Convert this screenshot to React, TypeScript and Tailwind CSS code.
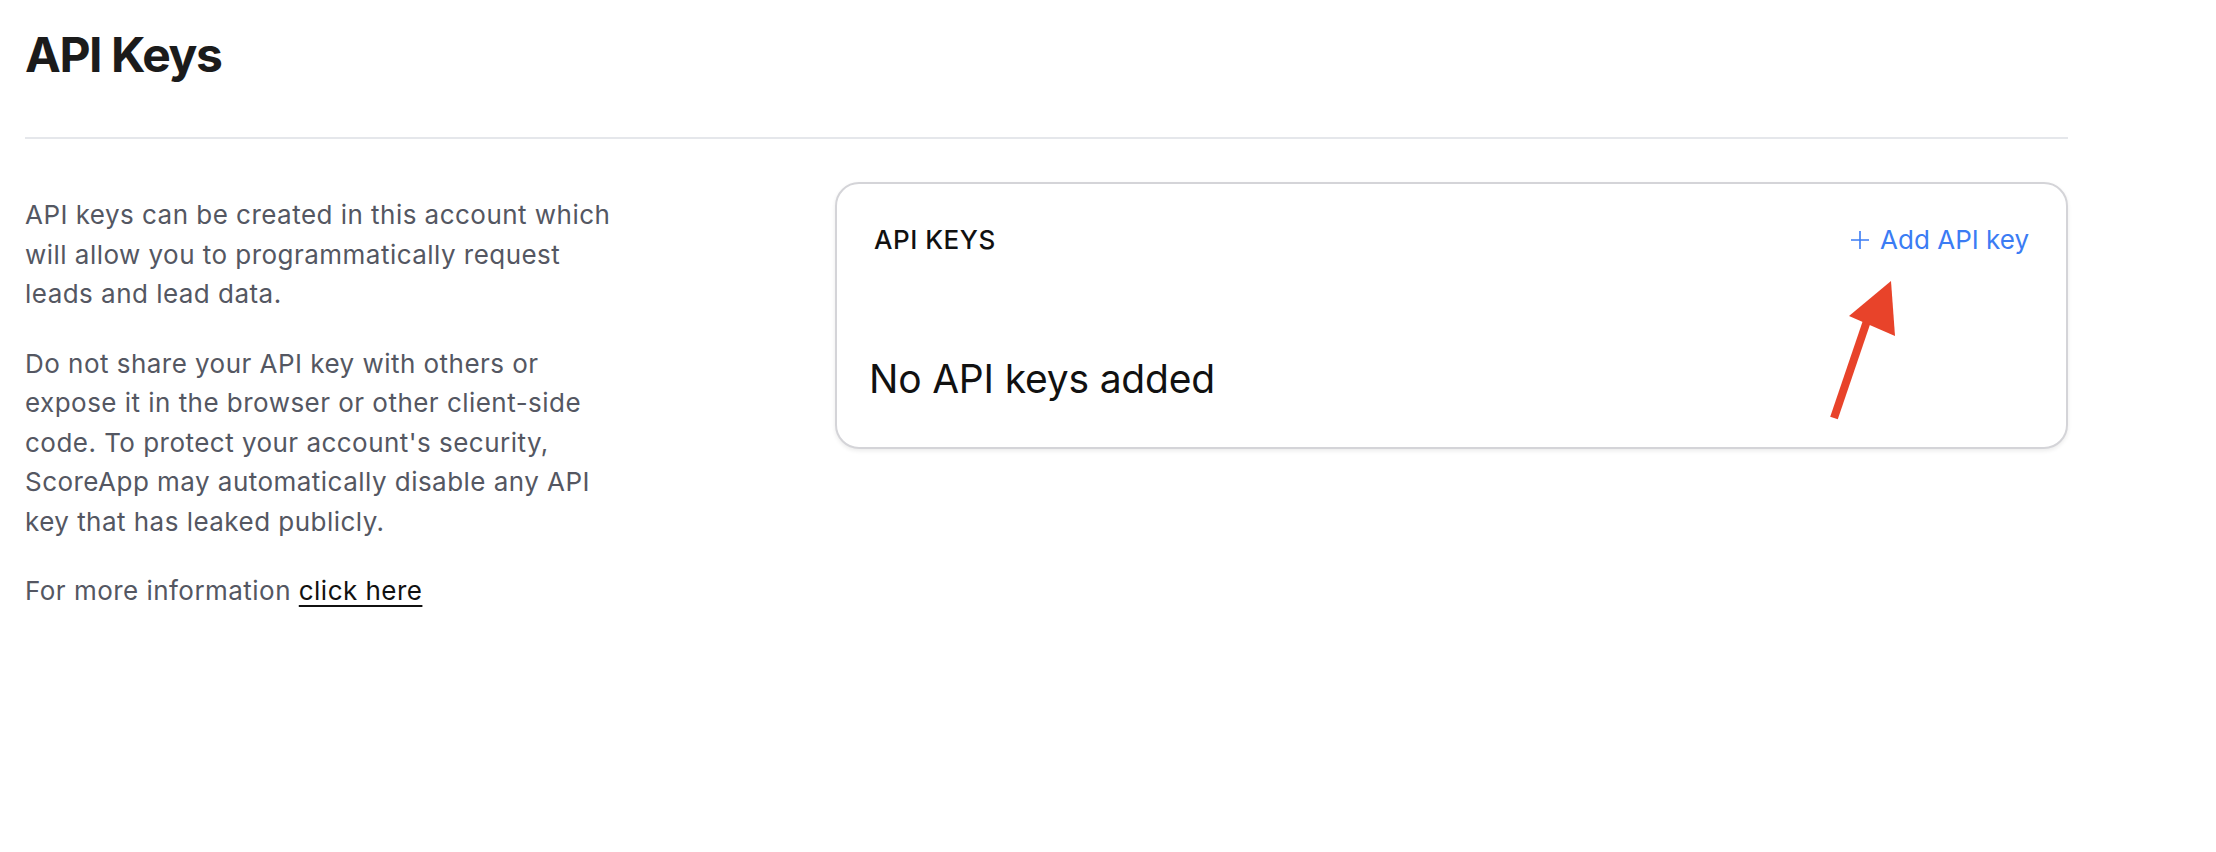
export default function App() {
  return (
    <div className="relative min-h-[852px] w-[2216px] bg-white font-['Inter',sans-serif] text-[#1a1a1a]">
      <div className="w-[2068px] pl-[25px]">
        {/* Header */}
        <h1 className="pt-[26px] text-[48px] font-bold leading-[58px] tracking-[-0.03em] text-[#1b1b1b]">
          API Keys
        </h1>
        <div className="mt-[53px] h-[2px] bg-[#e5e7eb]" />

        <div className="mt-[43px] flex items-start">
          {/* Description */}
          <div className="mt-[13px] w-[594px] text-[26px] leading-[39.5px] tracking-[0.018em] text-[#545762]">
            <p>
              API keys can be created in this account which will allow you to programmatically
              request leads and lead data.
            </p>
            <p className="mt-[30px]">
              Do not share your API key with others or expose it in the browser or other
              client-side code. To protect your account's security, ScoreApp may automatically
              disable any API key that has leaked publicly.
            </p>
            <p className="mt-[30px]">
              For more information{' '}
              <a
                href="#"
                className="text-[#111] underline decoration-2 underline-offset-[5px]"
              >
                click here
              </a>
            </p>
          </div>

          {/* Card */}
          <div className="ml-auto w-[1233px] rounded-[24px] border-2 border-[#d4d4d8] bg-white px-[37px] pb-[44px] pt-[36px] shadow-[0_2px_4px_rgba(0,0,0,0.08)]">
            <div className="flex items-center justify-between">
              <span className="text-[26px] font-medium leading-[40px] tracking-[0.02em] text-[#111]">
                API KEYS
              </span>
              <button className="flex items-center gap-[10px] text-[26px] leading-[40px] text-[#3b7cf4]">
                <svg width="20" height="20" viewBox="0 0 20 20" fill="none" stroke="currentColor" strokeWidth="1.6">
                  <path d="M10 1v18M1 10h18" />
                </svg>
                Add API key
              </button>
            </div>
            <p className="-ml-[5px] mt-[95px] text-[39px] leading-[48px] tracking-[-0.005em] text-[#111]">
              No API keys added
            </p>
          </div>
        </div>
      </div>

      {/* Annotation arrow */}
      <svg className="absolute left-0 top-0" width="2216" height="852" viewBox="0 0 2216 852">
        <line x1="1834" y1="418" x2="1868" y2="318" stroke="#e8432a" strokeWidth="8" />
        <polygon points="1891,281 1849,316 1895,336" fill="#e8432a" />
      </svg>
    </div>
  );
}
